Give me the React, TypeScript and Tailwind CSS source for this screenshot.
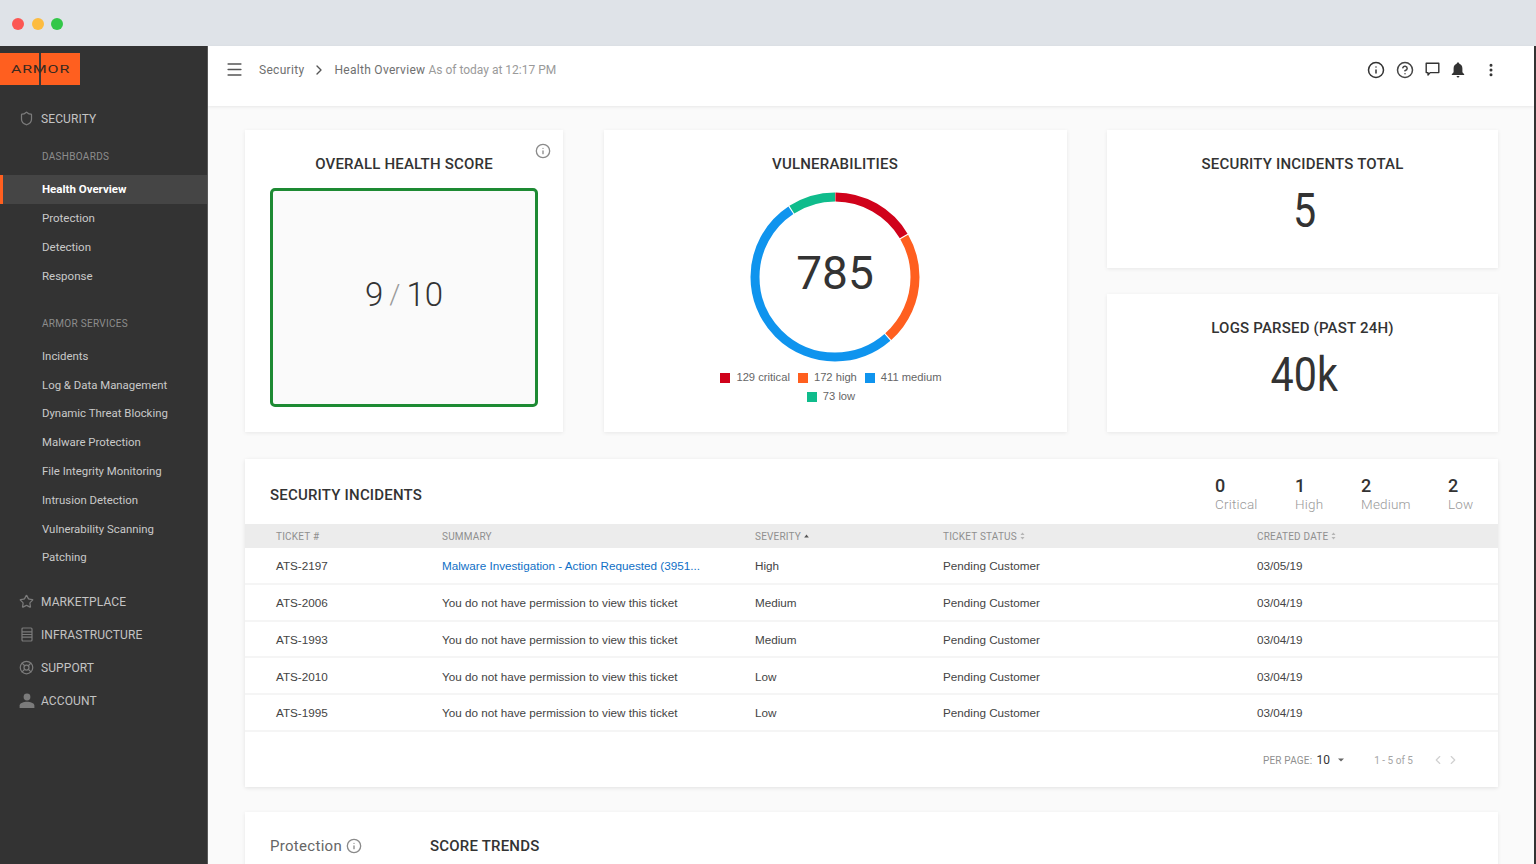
import { ChevronLeft, ChevronRight, CircleHelp, Info, LifeBuoy, Menu, MoreVertical, Shield, Star } from 'lucide-react';

const din = "font-['Roboto',sans-serif]";
const arial = "font-['Liberation_Sans',sans-serif]";

const dashboards = ['Health Overview', 'Protection', 'Detection', 'Response'];
const services = [
  'Incidents',
  'Log & Data Management',
  'Dynamic Threat Blocking',
  'Malware Protection',
  'File Integrity Monitoring',
  'Intrusion Detection',
  'Vulnerability Scanning',
  'Patching',
];

const tickets = [
  { id: 'ATS-2197', summary: 'Malware Investigation - Action Requested (3951...', severity: 'High', date: '03/05/19', link: true },
  { id: 'ATS-2006', summary: 'You do not have permission to view this ticket', severity: 'Medium', date: '03/04/19' },
  { id: 'ATS-1993', summary: 'You do not have permission to view this ticket', severity: 'Medium', date: '03/04/19' },
  { id: 'ATS-2010', summary: 'You do not have permission to view this ticket', severity: 'Low', date: '03/04/19' },
  { id: 'ATS-1995', summary: 'You do not have permission to view this ticket', severity: 'Low', date: '03/04/19' },
];

const counts = [
  { n: 0, label: 'Critical', w: 'w-[80px]' },
  { n: 1, label: 'High', w: 'w-[66px]' },
  { n: 2, label: 'Medium', w: 'w-[87px]' },
  { n: 2, label: 'Low', w: 'w-[25px]' },
];

const R = 80;
const C = 2 * Math.PI * R;
const segments = [
  { color: '#d0021b', from: 0.3, to: 59 },
  { color: '#ff5f1f', from: 59.8, to: 138 },
  { color: '#0f94ee', from: 138.8, to: 326 },
  { color: '#0fbc8c', from: 326.8, to: 359.7 },
];

function Donut() {
  return (
    <svg width="170" height="170" viewBox="0 0 170 170" className="block">
      <g transform="rotate(-90 85 85)">
        {segments.map((s) => (
          <circle
            key={s.color}
            cx="85"
            cy="85"
            r={R}
            fill="none"
            stroke={s.color}
            strokeWidth="9"
            strokeDasharray={`${((s.to - s.from) / 360) * C} ${C}`}
            strokeDashoffset={(-s.from / 360) * C}
          />
        ))}
      </g>
    </svg>
  );
}

function Legend({ color, label }: { color: string; label: string }) {
  return (
    <span className="mr-[8px] flex items-center gap-[6px]">
      <span className="h-[10px] w-[10px]" style={{ background: color }} />
      {label}
    </span>
  );
}

function SortIcon() {
  return (
    <svg width="5" height="8" viewBox="0 0 5 8" className="ml-[3px] inline-block">
      <path d="M2.5 0.5 L4.5 3 H0.5 Z M2.5 7.5 L4.5 5 H0.5 Z" fill="#b5b5b5" />
    </svg>
  );
}

function ServerIcon() {
  return (
    <svg width="12" height="15" viewBox="0 0 12 15" fill="none" stroke="#7b7b7b" strokeWidth="1.2">
      <rect x="1" y="1" width="10" height="13" rx="1" />
      <path d="M1 4.8H11M1 7.5H11M1 10.2H11" />
    </svg>
  );
}

function PersonIcon() {
  return (
    <svg width="16" height="15" viewBox="0 0 16 15" fill="#7b7b7b">
      <circle cx="8" cy="4" r="3.4" />
      <path d="M0.6 15 V12.6 C0.6 10 5 8.8 8 8.8 C11 8.8 15.4 10 15.4 12.6 V15 Z" />
    </svg>
  );
}

function BellIcon() {
  return (
    <svg width="14" height="16" viewBox="0 0 14 16" fill="#333">
      <path d="M7 0.5 C7.8 0.5 8.3 1 8.3 1.8 C10.4 2.4 11.4 4.2 11.4 6.4 V10.2 L13.2 12.3 V13 H0.8 V12.3 L2.6 10.2 V6.4 C2.6 4.2 3.6 2.4 5.7 1.8 C5.7 1 6.2 0.5 7 0.5 Z" />
      <path d="M5.6 14 H8.4 C8.4 14.9 7.8 15.5 7 15.5 C6.2 15.5 5.6 14.9 5.6 14 Z" />
    </svg>
  );
}

function ChatIcon() {
  return (
    <svg width="15" height="15" viewBox="0 0 15 15" fill="none" stroke="#333" strokeWidth="1.4">
      <path d="M1.2 1.2 H13.8 V10.6 H5.2 L3 13 V10.6 H1.2 Z" strokeLinejoin="round" />
    </svg>
  );
}

function NavHead({ icon, label }: { icon: React.ReactNode; label: string }) {
  return (
    <div className={`${din} flex h-[33px] items-center text-[12px] tracking-[0.1px] text-[#c4c4c4]`}>
      <span className="flex w-[41px] justify-center pl-[12px]">{icon}</span>
      {label}
    </div>
  );
}

function Sidebar() {
  return (
    <aside className="flex w-[208px] shrink-0 flex-col border-r border-[#5a5a5a] bg-[#333333]">
      <div className="mt-[7px] flex h-[32px] w-[80px] items-center justify-center bg-[#ff5f1f] bg-[linear-gradient(90deg,transparent_39px,#3a3a3a_39px,#3a3a3a_41px,transparent_41px)]">
        <span className={`${din} scale-x-[1.6] text-[10px] font-normal tracking-[0.5px] text-[#3a2a20]`}>ARMOR</span>
      </div>
      <div className="mt-[17px]">
        <NavHead icon={<Shield size={15} color="#7b7b7b" />} label="SECURITY" />
      </div>
      <div className={`${din} mt-[15px] pl-[42px] text-[10px] leading-[14px] tracking-[0.3px] text-[#8d8d8d]`}>DASHBOARDS</div>
      <div className="mt-[11px]">
        {dashboards.map((d, i) => (
          <div
            key={d}
            className={
              i === 0
                ? `${din} flex h-[29px] items-center border-l-[3px] border-[#ff5f1f] bg-[#454545] pl-[39px] text-[11.5px] font-bold text-white`
                : `${din} flex h-[29px] items-center pl-[42px] text-[11.5px] text-[#c9c9c9]`
            }
          >
            {d}
          </div>
        ))}
      </div>
      <div className={`${din} mt-[26px] pl-[42px] text-[10px] leading-[14px] tracking-[0.3px] text-[#8d8d8d]`}>ARMOR SERVICES</div>
      <div className="mt-[11px]">
        {services.map((s) => (
          <div key={s} className={`${din} flex h-[28.8px] items-center pl-[42px] text-[11.4px] text-[#c9c9c9]`}>
            {s}
          </div>
        ))}
      </div>
      <div className="mt-[13px]">
        <NavHead icon={<Star size={15} color="#7b7b7b" />} label="MARKETPLACE" />
        <NavHead icon={<ServerIcon />} label="INFRASTRUCTURE" />
        <NavHead icon={<LifeBuoy size={15} color="#7b7b7b" />} label="SUPPORT" />
        <NavHead icon={<PersonIcon />} label="ACCOUNT" />
      </div>
    </aside>
  );
}

function Header() {
  return (
    <header className="flex h-[60px] shrink-0 items-center justify-between bg-white pb-[13px] pl-[17px] pr-[35px] shadow-[0_1px_3px_rgba(0,0,0,0.08)]">
      <div className={`${din} flex items-center text-[12px] text-[#6f6f6f]`}>
        <Menu size={19} color="#555" strokeWidth={2} />
        <span className="ml-[15px] tracking-[0.3px]">Security</span>
        <ChevronRight size={16} color="#555" className="ml-[7px]" />
        <span className="ml-[7px] tracking-[0.3px]">Health Overview</span>
        <span className="ml-[3px] text-[#9a9a9a]">As of today at 12:17 PM</span>
      </div>
      <div className="flex items-center">
        <Info size={18} color="#333" />
        <CircleHelp size={18} color="#444" className="ml-[11px]" />
        <span className="ml-[11px] flex"><ChatIcon /></span>
        <span className="ml-[11px] flex"><BellIcon /></span>
        <MoreVertical size={16} color="#333" strokeWidth={2.5} className="ml-[18px]" />
      </div>
    </header>
  );
}

function CardTitle({ children }: { children: React.ReactNode }) {
  return <h2 className={`${din} text-[15px] font-medium leading-[18px] tracking-[0.2px] text-[#333]`}>{children}</h2>;
}

function Stats({ title, value }: { title: string; value: string }) {
  return (
    <div className="flex h-[138px] flex-col items-center bg-white pt-[25px] shadow-[0_1px_4px_rgba(0,0,0,0.08)]">
      <CardTitle>{title}</CardTitle>
      <div className={`${din} ml-[3px] mt-[11px] scale-x-[0.86] text-[48px] leading-[54px] text-[#333]`}>{value}</div>
    </div>
  );
}

function TopCards() {
  return (
    <div className="flex justify-between">
      <section className="relative flex h-[302px] w-[318px] flex-col items-center bg-white pt-[25px] shadow-[0_1px_4px_rgba(0,0,0,0.08)]">
        <CardTitle>OVERALL HEALTH SCORE</CardTitle>
        <Info size={16} color="#8a8a8a" className="absolute right-[12px] top-[13px]" />
        <div className={`${din} mt-[15px] flex h-[219px] w-[268px] items-center justify-center rounded-[5px] border-[3px] border-[#1d8a33] bg-[#fafafa] pb-[6px] text-[33px] font-light text-[#333]`}>
          9<span className="mx-[6px] text-[28px] text-[#9a9a9a]">/</span>10
        </div>
      </section>

      <section className="flex h-[302px] w-[463px] flex-col items-center bg-white pt-[25px] shadow-[0_1px_4px_rgba(0,0,0,0.08)]">
        <CardTitle>VULNERABILITIES</CardTitle>
        <div className="relative mt-[19px]">
          <Donut />
          <div className={`${din} absolute inset-0 flex items-center justify-center pb-[8px] text-[46px] text-[#333]`}>785</div>
        </div>
        <div className={`${arial} mt-[6px] flex w-[250px] flex-wrap justify-center text-[11.2px] leading-[19px] text-[#666]`}>
          <Legend color="#d0021b" label="129 critical" />
          <Legend color="#ff5f1f" label="172 high" />
          <Legend color="#0f94ee" label="411 medium" />
          <Legend color="#0fbc8c" label="73 low" />
        </div>
      </section>

      <div className="flex w-[391px] flex-col gap-[26px]">
        <Stats title="SECURITY INCIDENTS TOTAL" value="5" />
        <Stats title="LOGS PARSED (PAST 24H)" value="40k" />
      </div>
    </div>
  );
}

const cols = 'grid grid-cols-[166px_313px_188px_314px_1fr] pl-[31px]';

function IncidentsTable() {
  return (
    <section className="mt-[27px] bg-white shadow-[0_1px_4px_rgba(0,0,0,0.1)]">
      <div className="flex h-[65px] items-center justify-between px-[25px] pt-[6px]">
        <CardTitle>SECURITY INCIDENTS</CardTitle>
        <div className="flex">
          {counts.map((c) => (
            <div key={c.label} className={`${din} ${c.w}`}>
              <div className="text-[18px] font-medium leading-[20px] text-[#333]">{c.n}</div>
              <div className="text-[13.5px] font-light leading-[17px] tracking-[0.2px] text-[#9a9a9a]">{c.label}</div>
            </div>
          ))}
        </div>
      </div>
      <div className={`${cols} ${din} h-[24px] items-center bg-[#ececec] text-[10px] tracking-[0.2px] text-[#8f8f8f]`}>
        <span>TICKET #</span>
        <span>SUMMARY</span>
        <span className="flex items-center">
          SEVERITY
          <svg width="5" height="4" viewBox="0 0 5 4" className="ml-[3px]"><path d="M2.5 0.5 L4.8 3.5 H0.2 Z" fill="#555" /></svg>
        </span>
        <span className="flex items-center">TICKET STATUS<SortIcon /></span>
        <span className="flex items-center">CREATED DATE<SortIcon /></span>
      </div>
      {tickets.map((t) => (
        <div key={t.id} className={`${cols} ${arial} h-[36.8px] items-center border-b-2 border-[#f5f5f5] pt-[1px] text-[11.7px] text-[#444]`}>
          <span>{t.id}</span>
          <span className={t.link ? 'text-[#0f6fc6]' : ''}>{t.summary}</span>
          <span>{t.severity}</span>
          <span>Pending Customer</span>
          <span>{t.date}</span>
        </div>
      ))}
      <div className={`${din} flex h-[55px] items-center justify-end pr-[38px] pt-[2px] text-[10px] tracking-[0.2px] text-[#8f8f8f]`}>
        PER PAGE:
        <span className="ml-[4px] text-[12px] text-[#333]">10</span>
        <svg width="6" height="4" viewBox="0 0 6 4" className="ml-[8px]"><path d="M0 0.5H6L3 3.5Z" fill="#666" /></svg>
        <span className="ml-[30px] tracking-[0px] text-[#a5a5a5]">1 - 5 of 5</span>
        <ChevronLeft size={14} color="#d0d0d0" className="ml-[18px]" />
        <ChevronRight size={14} color="#d0d0d0" className="ml-[1px]" />
      </div>
    </section>
  );
}

function ScoreTrends() {
  return (
    <section className="mt-[25px] h-[70px] bg-white pl-[25px] pt-[23px] shadow-[0_1px_4px_rgba(0,0,0,0.08)]">
      <div className="flex items-center">
        <span className={`${din} flex w-[160px] items-center text-[15px] tracking-[0.3px] text-[#666]`}>
          Protection
          <Info size={16} color="#8a8a8a" className="ml-[4px]" />
        </span>
        <CardTitle>SCORE TRENDS</CardTitle>
      </div>
    </section>
  );
}

export default function App() {
  return (
    <div className="flex h-[864px] w-[1536px] flex-col overflow-hidden bg-[#dfe3e8]">
      <div className="flex h-[46px] shrink-0 items-center gap-[7.5px] pl-[12px] pt-[1px]">
        <span className="h-[12px] w-[12px] rounded-full bg-[#fc5753]" />
        <span className="h-[12px] w-[12px] rounded-full bg-[#fdbc40]" />
        <span className="h-[12px] w-[12px] rounded-full bg-[#33c748]" />
      </div>
      <div className="flex min-h-0 flex-1">
        <Sidebar />
        <div className="flex min-w-0 flex-1 flex-col bg-[#fafafa]">
          <Header />
          <main className="flex-1 overflow-hidden pl-[37px] pr-[36px] pt-[24px]">
            <TopCards />
            <IncidentsTable />
            <ScoreTrends />
          </main>
        </div>
        <div className="w-[2px] shrink-0 bg-[#333333]" />
      </div>
    </div>
  );
}
